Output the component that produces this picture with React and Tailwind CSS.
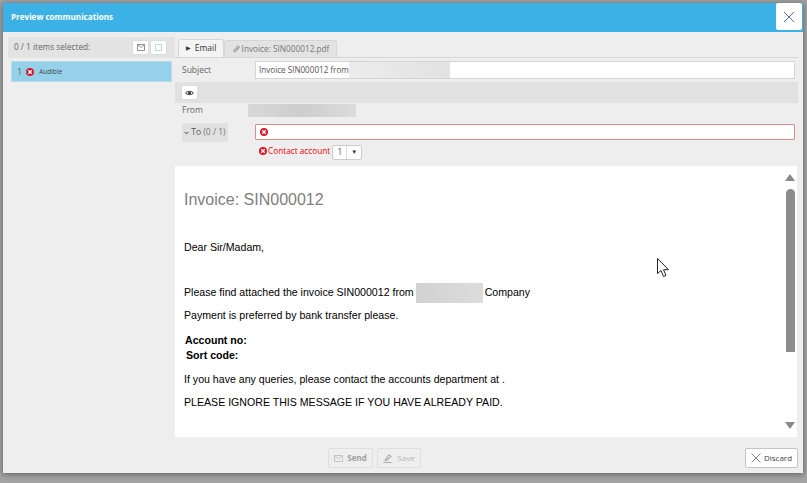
import React from "react";

// red circle with white x
function ErrIcon({ size = 9 }) {
  return (
    <svg width={size} height={size} viewBox="0 0 10 10" className="shrink-0">
      <circle cx="5" cy="5" r="5" fill="#d9182d" />
      <path d="M2.800 2.800l4.400 4.400M7.200 2.800l-4.400 4.400" stroke="#fff" strokeWidth="1.600" />
    </svg>
  );
}

function Eye() {
  return (
    <svg width="9" height="6" viewBox="0 0 9 6">
      <path d="M.5 3C2 .8 7 .8 8.500 3 7 5.200 2 5.200.5 3z" fill="none" stroke="#333" strokeWidth="1" />
      <circle cx="4.500" cy="3" r="1.500" fill="#333" />
    </svg>
  );
}

export default function App() {
  return (
    <div className="relative w-[807px] h-[483px] overflow-hidden bg-[#a3a3a3] pt-[3px] pl-[3px] font-['Open_Sans',sans-serif] text-[8.25px] text-[#555]">
      <div className="w-[800px] h-[470px] bg-[#eeeeee] flex flex-col shadow-[0_1px_6px_rgba(0,0,0,0.45)]">
        {/* title bar */}
        <div className="h-[29px] shrink-0 bg-[#3bb1e6] flex items-center justify-between pl-[8px] pr-[1px]">
          <span className="font-bold text-white text-[8.1px]">Preview communications</span>
          <button className="w-[26px] h-[27px] self-start bg-white rounded-[2px] flex items-center justify-center">
            <svg width="12" height="12" viewBox="0 0 12 12">
              <path d="M1 1l10 10M11 1L1 11" stroke="#4a6ea8" strokeWidth="1" />
            </svg>
          </button>
        </div>

        <div className="flex flex-1 min-h-0">
          {/* left list */}
          <div className="w-[172px] shrink-0 pl-[5px] pt-[5px]">
            <div className="h-[21px] w-[167px] bg-[#e3e3e3] flex items-center justify-between pl-[6px] pr-[8px]">
              <span className="text-[#666]">0 / 1 items selected:</span>
              <div className="flex gap-px">
                <span className="w-[17px] h-[15px] bg-white rounded-[2px] border border-[#ddd] flex items-center justify-center">
                  <svg width="8" height="7" viewBox="0 0 8 7"><path d="M.5.5h7v6h-7zM.5.5l3.500 3 3.500-3" fill="none" stroke="#777" strokeWidth=".8" /></svg>
                </span>
                <span className="w-[17px] h-[15px] bg-white rounded-[2px] border border-[#ddd] flex items-center justify-center">
                  <span className="w-[7px] h-[7px] border border-[#b5dcee]" />
                </span>
              </div>
            </div>
            <div className="mt-[3px] ml-[3px] w-[161px] h-[21px] bg-[#95d1ea] border border-[#b8dcec] flex items-center pl-[5px] gap-[4px]">
              <span className="text-[#666] text-[9px]">1</span>
              <ErrIcon size={8} />
              <span className="text-[6.500px] text-[#444] ml-px mt-px">Audible</span>
            </div>
          </div>

          {/* right part */}
          <div className="flex-1 min-w-0 flex flex-col">
            {/* tabs */}
            <div className="h-[26px] shrink-0 flex items-end pl-[3px] mr-[5px] border-b border-[#d6d6d6]">
              <div className="h-[18px] w-[46px] bg-[#f4f4f4] border border-b-0 border-[#d6d6d6] rounded-t-[3px] flex items-center justify-center gap-[4px] text-[#333] text-[8.500px]">
                <span className="text-[6px]">▶</span>
                <span>Email</span>
              </div>
              <div className="h-[17px] w-[113px] bg-[#e3e3e3] border border-b-0 border-[#d6d6d6] rounded-t-[3px] flex items-center justify-center gap-px text-[#777]">
                <svg width="9" height="8" viewBox="0 0 8 8"><path d="M7 2L3 6.500c-1 1-2.600-.4-1.600-1.500L5 1c.6-.7 1.800.3 1.200 1L3 5.500" fill="none" stroke="#888" strokeWidth=".9" /></svg>
                <span>Invoice: SIN000012.pdf</span>
              </div>
            </div>

            {/* subject */}
            <div className="h-[24px] shrink-0 flex items-center pl-[7px] pr-[8px]">
              <span className="w-[73px] text-[#666] text-[8.500px]">Subject</span>
              <div className="flex-1 h-[18px] bg-white border border-[#d4d4d4] flex items-center pl-[3px] overflow-hidden">
                <span className="whitespace-nowrap w-[90px] text-[8.100px]">Invoice SIN000012 from</span>
                <div className="w-[101px] h-[16px] bg-gradient-to-r from-[#ececec] to-[#e2e2e2]" />
              </div>
            </div>

            {/* preview toggle */}
            <div className="h-[21px] shrink-0 mr-[5px] bg-[#e1e1e1] flex items-center pl-[6px]">
              <span className="w-[17px] h-[15px] bg-white border border-[#ddd] rounded-[2px] flex items-center justify-center"><Eye /></span>
            </div>

            {/* from */}
            <div className="h-[15px] shrink-0 flex items-center pl-[7px]">
              <span className="w-[66px] text-[#666] text-[8.500px]">From</span>
              <div className="w-[108px] h-[13px] bg-gradient-to-r from-[#d8d8d8] via-[#cdcdcd] to-[#dcdcdc]" />
            </div>

            {/* to */}
            <div className="mt-[5px] shrink-0 flex items-start pl-[7px] pr-[8px]">
              <span className="w-[46px] h-[19px] bg-[#e1e1e1] rounded-[2px] flex items-center justify-center gap-[2px] text-[#555] text-[8.500px]">
                <svg width="5" height="4" viewBox="0 0 5 4"><path d="M.5.8l2 2 2-2" fill="none" stroke="#444" strokeWidth="1" /></svg>
                <span>To <span className="text-[#777]">(0 / 1)</span></span>
              </span>
              <div className="mt-px ml-[27px] flex-1 h-[16px] bg-white border border-[#dd8a8a] rounded-[1px] flex items-center pl-[4px]">
                <ErrIcon size={8} />
              </div>
            </div>

            {/* validation message */}
            <div className="mt-[3px] h-[15px] shrink-0 flex items-start pl-[84px] text-[#f00000]">
              <span className="mt-[2px]"><ErrIcon size={8} /></span>
              <span className="ml-px leading-[11px]">Contact account</span>
              <span className="ml-[2px] w-[30px] h-[15px] bg-white border border-[#ccc] rounded-[2px] flex text-[#555]">
                <span className="flex-1 flex items-center justify-center border-r border-[#ddd]">1</span>
                <span className="w-[14px] flex items-center justify-center text-[#333] text-[6px]">▼</span>
              </span>
            </div>

            {/* email body */}
            <div className="mt-[6px] flex-1 min-h-0 mr-[6px] bg-white flex font-['Liberation_Sans',sans-serif] text-[10.600px] text-black">
              <div className="flex-1 pl-[9px] pt-[25px]">
                <h1 className="text-[#808080] text-[16px] leading-[18px]">Invoice: SIN000012</h1>
                <p className="mt-[32px] leading-[13px]">Dear Sir/Madam,</p>
                <div className="mt-[29px] flex items-center h-[20px]">
                  <span>Please find attached the invoice SIN000012 from</span>
                  <div className="w-[67px] h-[20px] ml-[2px] bg-gradient-to-r from-[#d2d2d2] to-[#dcdcdc]" />
                  <span className="ml-[2px]">Company</span>
                </div>
                <p className="mt-[6px] leading-[13px]">Payment is preferred by bank transfer please.</p>
                <div className="mt-[11px] font-bold leading-[15px]">
                  <p className="ml-px">Account no:</p>
                  <p className="ml-[2px]">Sort code:</p>
                </div>
                <p className="mt-[10px] leading-[13px]">If you have any queries, please contact the accounts department at .</p>
                <p className="mt-[10px] leading-[13px]">PLEASE IGNORE THIS MESSAGE IF YOU HAVE ALREADY PAID.</p>
              </div>
              {/* scrollbar */}
              <div className="w-[18px] shrink-0 flex flex-col items-end pt-[8px] pb-[8px] pr-[2px]">
                <span className="w-0 h-0 border-x-[5px] border-x-transparent border-b-[7px] border-b-[#888]" />
                <span className="mt-[8px] w-[9px] h-[163px] bg-[#8c8c8c] rounded-t-[5px]" />
                <span className="flex-1" />
                <span className="w-0 h-0 border-x-[5px] border-x-transparent border-t-[7px] border-t-[#888]" />
              </div>
            </div>
          </div>
        </div>

        {/* footer */}
        <div className="h-[36px] shrink-0 flex items-start pt-[11px] pl-[325px] pr-[5px] text-[8px]">
          <button className="w-[45px] h-[20px] border border-[#dedede] rounded-[2px] flex items-center justify-center gap-[4px] text-[#a0a0a0] font-bold">
            <svg width="9" height="7" viewBox="0 0 9 7"><path d="M.5.5h8v6h-8zM.5.500l4 3 4-3" fill="none" stroke="#bbb" strokeWidth=".8" /></svg>
            Send
          </button>
          <button className="ml-[4px] w-[44px] h-[20px] border border-[#dedede] rounded-[2px] flex items-center justify-center gap-[4px] text-[#b5b5b5]">
            <svg width="10" height="9" viewBox="0 0 10 9"><path d="M2 6l4-5 2 1.300-4.500 4.200zM.5 8.500h8" fill="none" stroke="#aaa" strokeWidth="1.100" /></svg>
            Save
          </button>
          <button className="ml-auto w-[53px] h-[20px] bg-white border border-[#c4c4c4] rounded-[2px] flex items-center justify-center gap-[3px] text-[#444]">
            <svg width="10" height="10" viewBox="0 0 9 9"><path d="M.5.5l8 8M8.500.5l-8 8" stroke="#777" strokeWidth=".8" /></svg>
            Discard
          </button>
        </div>
      </div>

      {/* mouse pointer */}
      <svg width="13" height="20" viewBox="0 0 13 20" className="absolute left-[657px] top-[258px]">
        <path d="M.5.500v15l3.500-3 2.500 6 2.500-1-2.500-5.800h5z" fill="#fff" stroke="#222" strokeWidth="1" />
      </svg>
    </div>
  );
}
